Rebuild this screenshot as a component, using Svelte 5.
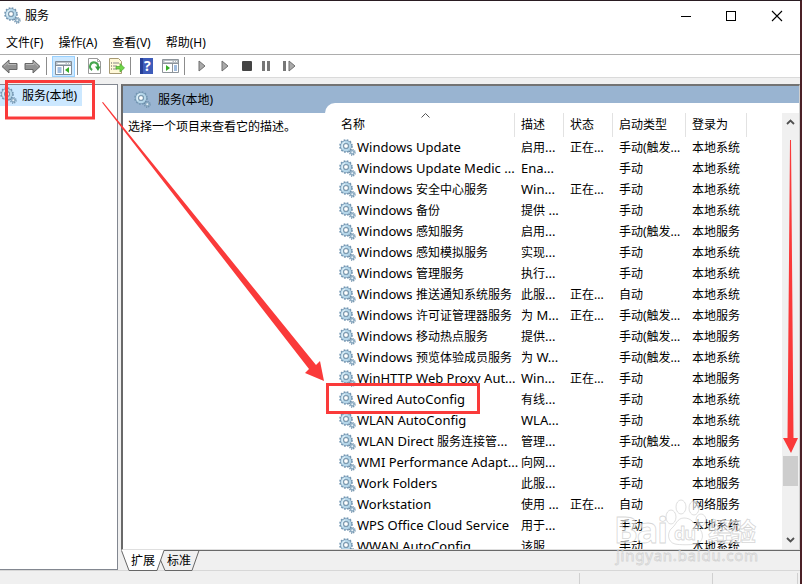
<script lang="ts">
	interface Service {
		name: string;
		desc: string;
		running?: boolean;
		start: string;
		logon: string;
	}

	const SYSTEM = '本地系统';
	const LOCAL = '本地服务';
	const MANUAL = '手动';
	const TRIGGER = '手动(触发...';

	const menus = ['文件(F)', '操作(A)', '查看(V)', '帮助(H)'];
	const columns = ['名称', '描述', '状态', '启动类型', '登录为'];

	const services: Service[] = [
		{ name: 'Windows Update', desc: '启用...', running: true, start: TRIGGER, logon: SYSTEM },
		{ name: 'Windows Update Medic ...', desc: 'Ena...', start: MANUAL, logon: SYSTEM },
		{ name: 'Windows 安全中心服务', desc: 'Win...', running: true, start: MANUAL, logon: SYSTEM },
		{ name: 'Windows 备份', desc: '提供 ...', start: MANUAL, logon: SYSTEM },
		{ name: 'Windows 感知服务', desc: '启用...', start: TRIGGER, logon: LOCAL },
		{ name: 'Windows 感知模拟服务', desc: '实现...', start: MANUAL, logon: SYSTEM },
		{ name: 'Windows 管理服务', desc: '执行...', start: MANUAL, logon: SYSTEM },
		{ name: 'Windows 推送通知系统服务', desc: '此服...', running: true, start: '自动', logon: SYSTEM },
		{ name: 'Windows 许可证管理器服务', desc: '为 M...', running: true, start: TRIGGER, logon: LOCAL },
		{ name: 'Windows 移动热点服务', desc: '提供...', start: TRIGGER, logon: LOCAL },
		{ name: 'Windows 预览体验成员服务', desc: '为 W...', start: TRIGGER, logon: SYSTEM },
		{ name: 'WinHTTP Web Proxy Aut...', desc: 'Win...', running: true, start: MANUAL, logon: LOCAL },
		{ name: 'Wired AutoConfig', desc: '有线...', start: MANUAL, logon: SYSTEM },
		{ name: 'WLAN AutoConfig', desc: 'WLA...', start: MANUAL, logon: SYSTEM },
		{ name: 'WLAN Direct 服务连接管...', desc: '管理...', start: TRIGGER, logon: LOCAL },
		{ name: 'WMI Performance Adapt...', desc: '向网...', start: MANUAL, logon: SYSTEM },
		{ name: 'Work Folders', desc: '此服...', start: MANUAL, logon: LOCAL },
		{ name: 'Workstation', desc: '使用 ...', running: true, start: '自动', logon: '网络服务' },
		{ name: 'WPS Office Cloud Service', desc: '用于...', start: MANUAL, logon: SYSTEM },
		{ name: 'WWAN AutoConfig', desc: '该服...', start: MANUAL, logon: SYSTEM }
	];

	// latin runs are set slightly larger than the 12px chinese text
	function runs(text: string) {
		return (text.match(/[\x20-\x7e]+|[^\x20-\x7e]+/g) ?? []).map((t) => ({
			text: t,
			latin: t.charCodeAt(0) < 128
		}));
	}
</script>

{#snippet gear()}
	<svg class="gear" width="17" height="17" viewBox="0 0 17 17">
		<circle cx="7" cy="7" r="5.9" fill="none" stroke="#7095b2" stroke-width="1.8" stroke-dasharray="1.7 1.39" />
		<circle cx="7" cy="7" r="4.1" fill="none" stroke="#7898b2" stroke-width="3.5" />
		<circle cx="7" cy="7" r="4.1" fill="none" stroke="#b5d6e9" stroke-width="2.3" />
		<path d="M4 9.5A4 4 0 0 1 6 3.2" fill="none" stroke="#dcedf6" stroke-width="1.3" />
		<circle cx="7" cy="7" r="2.4" fill="#fff" stroke="#68889f" stroke-width=".9" />
		<circle cx="13.3" cy="13.3" r="2.7" fill="none" stroke="#688aa5" stroke-width="1.4" stroke-dasharray="1.1 1" />
		<circle cx="13.3" cy="13.3" r="1.7" fill="#e8f2f8" stroke="#86a7bf" stroke-width="1.3" />
	</svg>
{/snippet}

{#snippet mixed(text: string)}
	{#each runs(text) as run}<span class:latin={run.latin}>{run.text}</span>{/each}
{/snippet}

{#snippet play()}
	<svg width="8" height="12" viewBox="0 0 8 12">
		<path d="M1 1v10l6-5z" fill="#aaa" stroke="#6f6f6f" />
	</svg>
{/snippet}

<div class="window">
	<header class="titlebar">
		<span class="app-icon">{@render gear()}</span>
		<span class="title">服务</span>
		<svg class="controls" width="114" height="14" viewBox="0 0 114 14" fill="none" stroke="#000">
			<path d="M0 7.5h10" />
			<rect x="45.500" y="2.500" width="9" height="9" />
			<path d="M91 2l10 10M101 2L91 12" stroke-width="1.1" />
		</svg>
	</header>

	<nav class="menubar">
		{#each menus as menu}
			<span>{menu}</span>
		{/each}
	</nav>

	<div class="toolbar">
		<svg class="arrow" width="17" height="15" viewBox="0 0 17 15">
			<path d="M1 7.500 8 1v3.500h8v6H8V14z" fill="#929292" stroke="#666" />
			<path d="M3 7.300 7 3.500v2h8" fill="none" stroke="#b9b9b9" />
		</svg>
		<svg class="arrow forward" width="17" height="15" viewBox="0 0 17 15">
			<path d="M16 7.500 9 1v3.500H1v6h8V14z" fill="#929292" stroke="#666" />
			<path d="M2 5.500h8v-2l4 3.800" fill="none" stroke="#b9b9b9" />
		</svg>
		<i class="sep"></i>
		<span class="tool active">
			<svg width="17" height="14" viewBox="0 0 17 14">
				<path d="M.5.5h16v13H.5z" fill="#fff" stroke="#808b96" />
				<path d="M1 1h15v3H1z" fill="#b9c2ca" />
				<path d="M1 4.500h15M8.500 5v8" stroke="#808b96" />
				<path d="M2.500 2.500h8M12 2.500h1M14 2.500h1" stroke="#fff" />
				<path d="M2.500 7h4M2.500 9h4M2.500 11h4" stroke="#427ac0" />
				<path d="M14 6v6l-4-3z" fill="#35ad25" />
			</svg>
		</span>
		<i class="sep after-active"></i>
		<svg class="refresh" width="13" height="16" viewBox="0 0 13 16">
			<path d="M.5.5h9l3 3v12H.5z" fill="#fff" stroke="#9a9a9a" />
			<path d="M9.500.5v3h3" fill="none" stroke="#aaa" />
			<path d="M4.200 12A4 4 0 1 1 10 9" fill="none" stroke="#48a651" stroke-width="2" />
			<path d="M7 8.500h5.500L10 13z" fill="#329c3c" />
		</svg>
		<svg class="export" width="16" height="16" viewBox="0 0 16 16">
			<path d="M.5.5h9l3 3v12H.5z" fill="#fff8d8" stroke="#a79a73" />
			<path d="M2 5h1M2 8h1M2 11h1" stroke="#555" />
			<path d="M4 5h6M4 8h4M4 11h4" stroke="#888" />
			<path d="M7 8.500h4v-3l4.500 4.500-4.500 4v-3H7z" fill="#70d649" stroke="#48a52d" stroke-width=".7" />
		</svg>
		<i class="sep"></i>
		<svg class="help" width="13" height="16" viewBox="0 0 13 16">
			<path d="M0 0h13v16H0z" fill="#3e5cba" />
			<path d="M0 0h3v16H0z" fill="#263f98" />
			<text x="4" y="13" fill="#fff" font-size="14" font-weight="700">?</text>
		</svg>
		<svg class="panel" width="17" height="14" viewBox="0 0 17 14">
			<path d="M.5.5h16v13H.5z" fill="#fff" stroke="#8d949a" />
			<path d="M1 1h15v3H1z" fill="#b8bec3" />
			<path d="M1 4.500h15M10.500 5v8" stroke="#8d949a" />
			<path d="M2.500 2.500h8M12 2.500h1M14 2.500h1" stroke="#fff" />
			<path d="M12 7h3M12 9h3M12 11h3" stroke="#427ac0" />
			<path d="M4 6v6l4-3z" fill="#35ad25" />
		</svg>
		<i class="sep"></i>
		<span class="play first">{@render play()}</span>
		<span class="play">{@render play()}</span>
		<i class="stop"></i>
		<i class="pause"></i>
		<span class="restart"><i></i>{@render play()}</span>
	</div>

	<main>
		<aside class="tree">
			<div class="tree-item">
				{@render gear()}
				<span>服务(本地)</span>
			</div>
		</aside>

		<section class="content">
			<div class="pane">
				<div class="pane-title">
					{@render gear()}
					<span>服务(本地)</span>
				</div>
				<div class="pane-body">
					<p class="hint">选择一个项目来查看它的描述。</p>
					<div class="list">
						<div class="table">
							<div class="row head">
								{#each columns as column, i}
									<span>
										{column}
										{#if i === 0}
											<svg class="sort" width="9" height="5" viewBox="0 0 9 5">
												<path d="M.5 4.500l4-4 4 4" fill="none" stroke="#555" />
											</svg>
										{/if}
									</span>
								{/each}
							</div>
							{#each services as service}
								<div class="row">
									<span class="name">{@render gear()}{@render mixed(service.name)}</span>
									<span>{@render mixed(service.desc)}</span>
									<span>{service.running ? '正在...' : ''}</span>
									<span>{service.start}</span>
									<span>{service.logon}</span>
								</div>
							{/each}
						</div>
						<div class="scrollbar">
							<svg width="9" height="6" viewBox="0 0 9 6">
								<path d="M1 5l3.500-3.500L8 5" fill="none" stroke="#505050" stroke-width="1.800" />
							</svg>
							<div class="track"><div class="thumb"></div></div>
							<svg width="9" height="6" viewBox="0 0 9 6">
								<path d="M1 1l3.500 3.500L8 1" fill="none" stroke="#505050" stroke-width="1.800" />
							</svg>
						</div>
					</div>
				</div>
			</div>
			<div class="tabs">
				<svg class="tab-shape" width="80" height="21" viewBox="0 0 80 21">
					<path d="M0 0h43l-7 20H8z" fill="#fff" />
					<path d="M.5.5 8 20.500h28L43 .5h35L71 20.500H44L39.500 10" fill="none" stroke="#666" />
				</svg>
				<span>扩展</span>
				<span>标准</span>
			</div>
		</section>
	</main>

	<footer><i></i><i></i><i></i></footer>

	<svg class="overlay" width="802" height="584" viewBox="0 0 802 584">
		<g class="watermark">
			<text x="614" y="543" font-size="36" textLength="54">Bai</text>
			<ellipse cx="671" cy="517" rx="5" ry="7" />
			<ellipse cx="681" cy="507" rx="5" ry="7" />
			<ellipse cx="694" cy="508" rx="5" ry="7" />
			<ellipse cx="701" cy="520" rx="5" ry="6" />
			<path d="M684 518c-7 0-8 7-12 10-5 4-5 14 3 16 5 1 15 1 21 0 8-2 8-11 3-16-5-4-7-10-15-10z" />
			<text x="674" y="540" font-size="18" textLength="22">du</text>
			<text x="708" y="541" font-size="25" textLength="48">经验</text>
			<text class="url" x="616" y="561" font-size="15" textLength="142">jingyan.baidu.com</text>
		</g>
		<g fill="none" stroke="#fa3a3a" stroke-width="3">
			<rect x="6.500" y="81.500" width="87" height="36.500" />
			<rect x="327.500" y="384.500" width="151" height="28" />
		</g>
		<g fill="#fa3a3a">
			<path d="M102 102.500 309 369l-4 4 19 8-4-20-4 4L103 102z" />
			<path d="M790 140l-2.500 298H783l8 15 7-15h-4.500L791 140z" />
		</g>
	</svg>
</div>

<style>
	.window {
		position: relative;
		display: flex;
		flex-direction: column;
		box-sizing: border-box;
		width: 802px;
		height: 584px;
		overflow: hidden;
		border-top: 1px solid #2a1c22;
		border-right: 2px solid #4b2026;
		background: #f0f0f0;
		color: #000;
		font: 12px/16px 'Noto Sans', 'Noto Sans CJK SC', sans-serif;
	}

	svg {
		display: block;
		flex: none;
	}

	.titlebar {
		display: flex;
		align-items: center;
		height: 29px;
		padding-left: 4px;
		background: #fff;
	}

	.title {
		flex: 1;
		padding-left: 4px;
	}

	.controls {
		margin-right: 5px;
	}

	.menubar {
		display: flex;
		gap: 15px;
		height: 24px;
		padding-left: 6px;
		line-height: 25px;
		background: #fff;
		border-bottom: 1px solid #adadad;
	}

	.toolbar {
		display: flex;
		align-items: center;
		height: 22px;
		background: #fff;
		border-bottom: 1px solid #dadada;
	}

	.arrow {
		margin-left: 1px;
	}

	.forward {
		margin-left: 6px;
	}

	.sep {
		width: 1px;
		height: 18px;
		margin-left: 5px;
		background: #8c8c8c;
	}

	.active {
		box-sizing: border-box;
		width: 23px;
		height: 21px;
		margin-left: 5px;
		padding: 4px 2px;
		background: #cce8ff;
		border: 1px solid #99d1ff;
	}

	.after-active {
		margin-left: 2px;
	}

	.refresh {
		margin-left: 10px;
	}

	.export {
		margin-left: 8px;
	}

	.help {
		margin-left: 9px;
	}

	.panel {
		margin-left: 9px;
	}

	.play {
		margin-left: 15px;
	}

	.play.first {
		margin-left: 13px;
	}

	.stop {
		width: 10px;
		height: 10px;
		margin-left: 13px;
		border-radius: 1px;
		background: #444;
	}

	.pause {
		width: 2px;
		height: 10px;
		margin-left: 10px;
		border: solid #777;
		border-width: 0 3px;
	}

	.restart {
		display: flex;
		gap: 2px;
		margin-left: 13px;
	}

	.restart i {
		width: 3px;
		height: 10px;
		margin-top: 1px;
		background: #777;
	}

	main {
		display: flex;
		gap: 3px;
		height: 486px;
		padding-top: 6px;
	}

	.tree {
		box-sizing: border-box;
		width: 118px;
		border: 1px solid #828790;
		border-left: 0;
		background: #fff;
	}

	.tree-item {
		display: flex;
		align-items: center;
		width: 82px;
		height: 21px;
		background: #cce8ff;
	}

	.tree-item span {
		padding-left: 5px;
	}

	.content {
		flex: 1;
		display: flex;
		flex-direction: column;
	}

	.pane {
		display: flex;
		flex-direction: column;
		height: 463px;
		border: 2px solid #696969;
		border-right: 1px solid #d0d0d0;
		border-bottom: 1px solid #dfdfdf;
		border-top-color: #737373;
		background: #fff;
	}

	.pane-title {
		display: flex;
		align-items: center;
		gap: 7px;
		height: 27px;
		padding-left: 11px;
		background: #99b4d1;
	}

	.pane-title span {
		padding-top: 1px;
	}

	.pane-body {
		display: flex;
		height: 436px;
	}

	.hint {
		width: 197px;
		margin: 0;
		padding: 6px 0 0 5px;
		white-space: nowrap;
	}

	.list {
		display: flex;
		flex: 1;
		justify-content: space-between;
		height: 446px;
		margin-top: -10px;
		overflow: hidden;
		border-radius: 10px 0 0 0;
		background: #fff;
	}

	.table {
		padding-top: 10px;
	}

	.row {
		display: grid;
		grid-template-columns: 190px 49px 49px 73px 61px;
		height: 21px;
		line-height: 21px;
		white-space: nowrap;
	}

	.row > span {
		display: block;
		padding-left: 6px;
	}

	.row > .name {
		display: flex;
		padding-left: 14px;
		white-space: pre;
	}

	.name .gear {
		margin: 2px 1px 0 0;
	}

	.latin {
		font-size: 13px;
	}

	.row.head {
		height: 24px;
		line-height: 24px;
	}

	.head > span {
		position: relative;
		border-right: 1px solid #e2e2e2;
	}

	.head > span:first-child {
		padding-left: 16px;
	}

	.sort {
		position: absolute;
		left: 96px;
		top: 0;
	}

	.scrollbar {
		display: flex;
		flex-direction: column;
		align-items: center;
		width: 17px;
		margin-top: 10px;
		padding: 6px 0;
		box-sizing: border-box;
		background: #f0f0f0;
	}

	.track {
		flex: 1;
		width: 15px;
	}

	.thumb {
		height: 30px;
		margin-top: 331px;
		background: #cdcdcd;
	}

	.tabs {
		position: relative;
		display: flex;
		gap: 12px;
		height: 20px;
		padding-left: 10px;
		border-top: 1px solid #696969;
		line-height: 20px;
	}

	.tabs span {
		position: relative;
	}

	.tab-shape {
		position: absolute;
		left: 0;
		top: -1px;
	}

	footer {
		display: flex;
		flex: 1;
		border-top: 1px solid #d7d7d7;
	}

	footer i {
		box-sizing: border-box;
		width: 580px;
		margin-top: 2px;
		border-right: 1px solid #d0d0d0;
	}

	footer i + i {
		width: 133px;
	}

	footer i:last-child {
		width: 85px;
	}

	.overlay {
		position: absolute;
		left: 0;
		top: -1px;
		pointer-events: none;
	}

	.watermark {
		fill: #fff;
		fill-opacity: 0.6;
		stroke: #bbb;
		stroke-opacity: 0.6;
		stroke-width: 0.8;
		font-weight: 700;
	}

	.url {
		font-weight: 400;
	}
</style>
